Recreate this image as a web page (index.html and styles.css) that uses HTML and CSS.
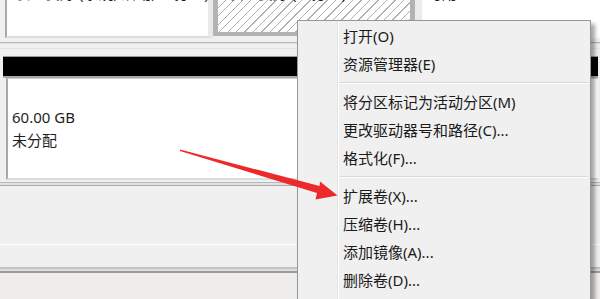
FILE: index.html
```html
<!DOCTYPE html>
<html lang="zh-CN">
<head>
<meta charset="utf-8">
<title>磁盘管理</title>
<link rel="stylesheet" href="styles.css">
</head>
<body>
<div class="screen">
  <div class="top-row">
    <div class="part p1"><span class="cut">状态良好 (系统, 活动, 主分区)</span></div>
    <div class="part p2"><span class="cut">状态良好 (主分区)</span></div>
    <div class="part p3"><span class="cut">可用</span></div>
  </div>
  <div class="gap"></div>
  <div class="bar"></div>
  <div class="big">
    <div class="size">60.00 GB</div>
    <div class="state">未分配</div>
  </div>
  <div class="lines1"></div>
  <div class="mid"></div>
  <div class="lines2"></div>
  <div class="foot"></div>
</div>

<div class="menu">
  <div class="item">打开(O)</div>
  <div class="item">资源管理器(E)</div>
  <div class="sep"></div>
  <div class="item">将分区标记为活动分区(M)</div>
  <div class="item">更改驱动器号和路径(C)...</div>
  <div class="item">格式化(F)...</div>
  <div class="sep"></div>
  <div class="item">扩展卷(X)...</div>
  <div class="item">压缩卷(H)...</div>
  <div class="item">添加镜像(A)...</div>
  <div class="item">删除卷(D)...</div>
</div>

<svg class="arrow" width="600" height="299" viewBox="0 0 600 299" xmlns="http://www.w3.org/2000/svg">
  <polygon points="180,149.5 319.5,186 320,181.5 337.5,195.5 315.5,199.5 317,193 180,151" fill="#ec2a2a"/>
</svg>
</body>
</html>
```
FILE: styles.css
```css
* { box-sizing: border-box; margin: 0; padding: 0; }
html, body { width: 600px; height: 299px; overflow: hidden; }
body {
  background: #f0f0f0;
  font-family: "Noto Sans", "Noto Sans CJK SC", sans-serif;
  font-size: 15px;
  color: #1e1e1e;
  position: relative;
}
.screen { width: 600px; height: 299px; display: flex; flex-direction: column; }

.top-row {
  display: flex;
  height: 43px;
  padding-left: 5px;
  border-bottom: 1px solid #b9b9b9;
  flex: none;
}
.part { overflow: hidden; background: #fff; }
.cut { display: block; white-space: nowrap; line-height: 20px; margin-top: -17px; }
.p1 {
  width: 208px; height: 38px;
  border-left: 2px solid #a9a9a9;
  border-right: 5px solid #e9e9e9;
  border-bottom: 2px solid #dcdcdc;
  padding-left: 8px;
}
.p2 {
  width: 202px; height: 36px;
  border-left: 5px solid #b3b3b3;
  border-right: 5px solid #b3b3b3;
  border-bottom: 4px solid #b3b3b3;
  padding-left: 10px;
  background: repeating-linear-gradient(135deg, #fff 0 5px, #b0b0b0 5px 6px);
}
.p3 {
  flex: 1; height: 38px;
  border-left: 7px solid #ececec;
  padding-left: 5px;
}

.gap {
  height: 13px; flex: none;
  background: linear-gradient(#e2e2e2 0 1px, #f0f0f0 1px 5px, #e4e4e4 5px 6px, #f0f0f0 6px);
}
.bar {
  height: 22px; flex: none;
  margin: 0 2px 0 3px;
  background: #000;
  border-top: 1px solid #9a9a9a;
  border-bottom: 2px solid #a8a8a8;
}
.big {
  height: 102px; flex: none;
  margin: 0 2px 0 6px;
  background: #fff;
  border-left: 2px solid #a9a9a9;
  border-top: 1px solid #cfcfcf;
  border-bottom: 2px solid #dcdcdc;
  padding: 27px 0 0 4px;
  line-height: 23px;
}
.lines1 {
  height: 8px; flex: none;
  background: linear-gradient(#f0f0f0 0 2px, #b9b9b9 2px 3px, #e2e2e2 3px 5px, #a9a9a9 5px 6px, #f0f0f0 6px);
}
.mid {
  height: 79px; flex: none;
  background: linear-gradient(#f0f0f0 0 56px, #ffffff 56px 57px, #f0f0f0 57px);
}
.lines2 {
  height: 6px; flex: none;
  background: linear-gradient(#c2c2c2 0 2px, #dcdcdc 2px 4px, #9c9c9c 4px 6px);
}
.foot { flex: 1; background: #eeedeb; }

.menu {
  position: absolute;
  left: 297px; top: 20px;
  width: 294px; height: 279px;
  border: 1px solid #979797;
  border-bottom: none;
  background: linear-gradient(to right, #f0f0f0 0 39px, #e2e3e3 39px 40px, #ffffff 40px 41px, #f0f0f0 41px);
  box-shadow: 4px 4px 4px rgba(0, 0, 0, 0.35);
  padding-top: 1px;
  font-family: "Noto Sans", "Noto Sans CJK SC", sans-serif;
  color: #1a1a1a;
  overflow: hidden;
}
.item { height: 28px; line-height: 28px; padding-left: 45px; white-space: nowrap; }
.sep {
  height: 10px;
  margin: 0 2px 0 42px;
  background: linear-gradient(#f0f0f0 0 4px, #d7d7d7 4px 5px, #ffffff 5px 6px, #f0f0f0 6px);
}

.arrow { position: absolute; left: 0; top: 0; pointer-events: none; }
```
